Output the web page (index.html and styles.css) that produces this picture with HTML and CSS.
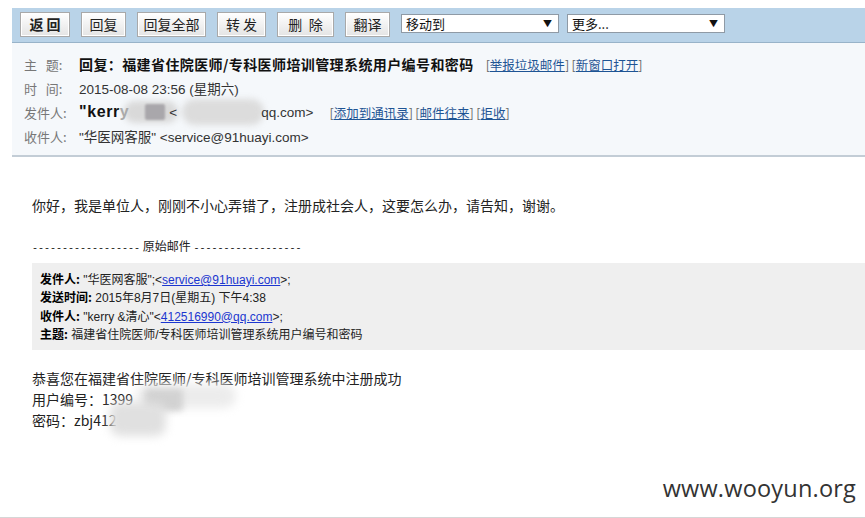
FILE: index.html
```html
<!DOCTYPE html>
<html lang="zh-CN">
<head>
<meta charset="utf-8">
<link rel="stylesheet" href="styles.css">
</head>
<body>
<div class="page">
  <div class="toolbar">
    <button class="btn b-back">返 回</button>
    <button class="btn b-reply">回复</button>
    <button class="btn b-all">回复全部</button>
    <button class="btn b-fwd">转 发</button>
    <button class="btn b-del">删&nbsp;&nbsp;除</button>
    <button class="btn b-tr">翻译</button>
    <div class="sel s-move"><span>移动到</span><i>▼</i></div>
    <div class="sel s-more"><span>更多...</span><i>▼</i></div>
  </div>
  <div class="head">
    <div class="row"><span class="lbl">主&nbsp;&nbsp;&nbsp;题:</span><span class="subj">回复：福建省住院医师/专科医师培训管理系统用户编号和密码</span><span class="links">[<a>举报垃圾邮件</a>]&thinsp;[<a>新窗口打开</a>]</span></div>
    <div class="row"><span class="lbl">时&nbsp;&nbsp;&nbsp;间:</span><span class="val">2015-08-08 23:56 (星期六)</span></div>
    <div class="row"><span class="blur bl1"></span><span class="blur bl2"></span><span class="blur bl3"></span><span class="lbl">发件人:</span><span class="val"><b class="kerry">"kerr<span class="cut">y</span></b><span class="gap1"></span>&lt;<span class="gap2"></span>qq.com&gt;</span><span class="links l2">[<a>添加到通讯录</a>]&thinsp;[<a>邮件往来</a>]&thinsp;[<a>拒收</a>]</span></div>
    <div class="row"><span class="lbl">收件人:</span><span class="val">"华医网客服" &lt;service@91huayi.com&gt;</span></div>
  </div>
  <div class="body">
    <p class="msg">你好，我是单位人，刚刚不小心弄错了，注册成社会人，这要怎么办，请告知，谢谢。</p>
    <p class="orig"><span class="dash">------------------</span> 原始邮件 <span class="dash">------------------</span></p>
    <div class="quote">
      <div><b>发件人:</b> "华医网客服";&lt;<a>service@91huayi.com</a>&gt;;</div>
      <div><b>发送时间:</b> 2015年8月7日(星期五) 下午4:38</div>
      <div><b>收件人:</b> "kerry &amp;清心"&lt;<a>412516990@qq.com</a>&gt;;</div>
      <div><b>主题:</b> 福建省住院医师/专科医师培训管理系统用户编号和密码</div>
    </div>
    <div class="content">
      <div>恭喜您在福建省住院医师/专科医师培训管理系统中注册成功</div>
      <div class="rel">用户编号：1399<span class="blur bl5"></span><span class="blur bl4"></span></div>
      <div class="rel">密码：zbj412<span class="blur bl6"></span></div>
    </div>
  </div>
  <div class="mark">www.wooyun.org</div>
</div>
</body>
</html>
```

FILE: styles.css
```css
* { box-sizing: border-box; }
html, body { margin: 0; padding: 0; background: #fff; }
body { font-family: "Liberation Sans", Arial, "Noto Sans CJK SC", sans-serif; color: #333; width: 865px; height: 518px; overflow: hidden; }
.page { position: relative; height: 518px; padding-top: 8px; border-bottom: 1px solid #d6d6d6; }

.toolbar { margin-left: 12px; height: 35px; background: #b9d3e8; border-bottom: 1px solid #98b3c9; display: flex; align-items: flex-start; padding: 4px 0 0 8px; }
.btn { height: 25px; margin: 0 11px 0 0; padding: 0; border: 1px solid #a9a9a9; border-radius: 0; background: linear-gradient(#ffffff, #e4e4e4); font-family: "Noto Sans CJK SC", sans-serif; font-size: 14px; color: #222; line-height: 21px; box-shadow: inset 0 0 0 1px #fff; }
.b-back { width: 50px; font-weight: bold; }
.b-reply { width: 45px; }
.b-all { width: 69px; }
.b-fwd { width: 49px; }
.b-del { width: 57px; }
.b-tr { width: 45px; }
.sel { margin-top: 2px; height: 19px; background: #fff; border: 1px solid #8f9aa5; display: flex; align-items: center; justify-content: space-between; padding: 0 6px 0 4px; font-family: "Noto Sans CJK SC", sans-serif; font-size: 13px; color: #111; }
.sel span { line-height: 17px; }
.sel i { font-style: normal; font-size: 9px; color: #111; }
.s-move { width: 158px; margin-right: 8px; }
.s-more { width: 158px; }

.head { margin-left: 12px; height: 114px; background: #f5f8fb; border-bottom: 2px solid #c3cdd6; padding: 9px 0 0 12px; }
.row { position: relative; height: 24px; display: flex; align-items: center; font-size: 13px; }
.lbl { position: relative; width: 55px; color: #777; font-family: "Noto Sans CJK SC", sans-serif; font-size: 13px; }
.val { position: relative; color: #333; font-family: "Liberation Sans", "Noto Sans CJK SC", sans-serif; font-size: 13.5px; }
.subj { font-weight: bold; font-size: 14px; color: #111; font-family: "Noto Sans CJK SC", sans-serif; letter-spacing: 0.4px; }
.links { position: relative; margin-left: 12px; color: #666; font-family: "Noto Sans CJK SC", sans-serif; font-size: 12.5px; }
.links a { color: #1e5494; text-decoration: underline; }
.l2 { margin-left: 16px; }
.kerry { color: #111; font-weight: bold; font-size: 16px; letter-spacing: 0.6px; }
.cut { color: #aaa; }
.gap1 { display: inline-block; width: 40px; }
.gap2 { display: inline-block; width: 84px; }
.blur { position: absolute; filter: blur(3px); border-radius: 8px; }
.bl1 { left: 100px; top: 1px; width: 54px; height: 22px; background: #d9d9d9; border-radius: 11px; }
.bl2 { left: 121px; top: 4px; width: 20px; height: 16px; background: #a9a7ab; filter: blur(1px); border-radius: 2px; }
.bl3 { left: 158px; top: -1px; width: 82px; height: 26px; background: #dcdcdc; border-radius: 13px; }

.body { padding: 0 0 0 32px; }
.msg { margin: 38px 0 0; font-family: "Noto Sans CJK SC", sans-serif; font-size: 14px; color: #222; line-height: 20px; }
.orig { margin: 22px 0 0; font-family: "Noto Sans CJK SC", sans-serif; font-size: 12px; color: #222; line-height: 18px; }
.dash { font-family: "Liberation Mono", monospace; font-size: 10px; }
.quote { margin-top: 5px; background: #efefef; padding: 7px 0 7px 8px; font-family: "Liberation Sans", "Noto Sans CJK SC", sans-serif; font-size: 12px; line-height: 18.3px; color: #222; }
.quote div { height: 18.3px; }
.quote b { font-family: "Noto Sans CJK SC", sans-serif; font-weight: bold; color: #000; }
.quote a { color: #1b36d0; text-decoration: underline; }
.content { margin-top: 18px; font-family: "Noto Sans CJK SC", sans-serif; font-size: 14px; line-height: 21px; color: #222; }
.rel { position: relative; }
.bl5 { left: 104px; top: -5px; width: 100px; height: 24px; background: #ececec; filter: blur(5px); border-radius: 12px; }
.bl4 { left: 113px; top: 0; width: 38px; height: 22px; background: #d2d2d2; filter: blur(3px); border-radius: 4px; }
.bl6 { left: 78px; top: -8px; width: 56px; height: 34px; background: #e0e0e0; filter: blur(5px); border-radius: 10px; }

.mark { position: absolute; right: 9px; top: 472px; font-family: "Open Sans", "DejaVu Sans", sans-serif; font-size: 23.5px; color: #333; letter-spacing: 0.2px; }
```
